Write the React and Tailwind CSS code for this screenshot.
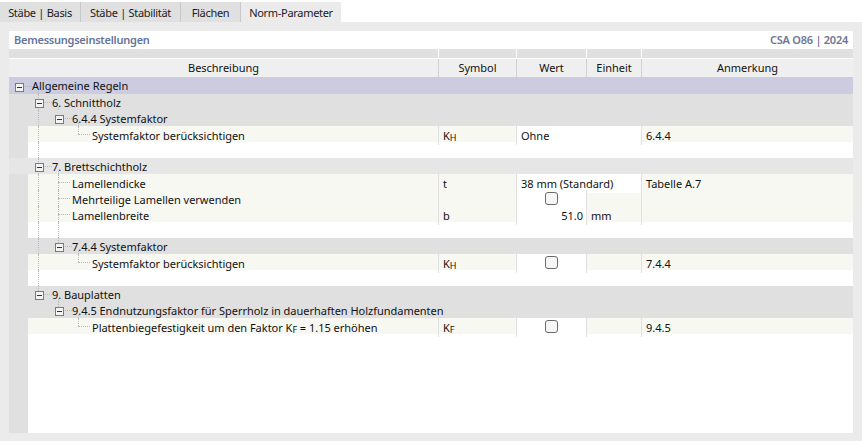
const font = { fontFamily: '"Noto Sans", sans-serif' };

const Box = ({ left, top = 5 }) => (
  <span className="absolute h-[9px] w-[9px] border border-[#7a7a7a] bg-[#f4f4f4] flex items-center justify-center" style={{ left, top }}>
    <span className="block w-[5px] h-px bg-[#333]" />
  </span>
);
const V = ({ x, top = 0, h = 16 }) => (
  <span className="absolute w-0 border-l border-dotted border-[#b8b8b8]" style={{ left: x, top, height: h }} />
);
const H = ({ x, w, top = 8 }) => (
  <span className="absolute h-0 border-t border-dotted border-[#b8b8b8]" style={{ left: x, width: w, top }} />
);

const Sep = ({ children, className = "" }) => (
  <div className={`relative z-10 flex items-center pt-[2px] border-l border-[#e0e0e0] min-w-0 whitespace-nowrap ${className}`}>{children}</div>
);

const Sym = ({ k }) => (
  <span>K<span className="text-[9px] relative top-[1px]">{k}</span></span>
);

const Check = () => (
  <span className="block w-[13px] h-[13px] -mt-[3px] rounded-[3px] border border-[#6a6a6a] bg-[#f6f6f6]" />
);

function Group({ level, label, bg = "bg-[#e0e0e0]", lines = [] }) {
  const boxX = 15 + level * 20 - 9;
  return (
    <div className={`relative h-4 pt-[2px] flex items-center ${bg} text-[#111]`}>
      {lines.map((l, i) => <V key={i} {...l} />)}
      <Box left={boxX} />
      <H x={boxX + 10} w={7} />
      <span className="relative z-10 whitespace-nowrap" style={{ paddingLeft: 23 + level * 20 }}>{label}</span>
    </div>
  );
}

function Blank({ lines = [] }) {
  return (
    <div className="relative h-4 flex">
      <div className="w-[19px] bg-[#e0e0e0]" />
      <div className="flex-1 bg-white" />
      {lines.map((l, i) => <V key={i} {...l} />)}
    </div>
  );
}

function Item({ level, label, symbol, value, check, wertOnly, right, unit, note, lines = [], hx, hw = 12 }) {
  return (
    <div className="relative h-4 flex text-[#111]">
      <div className="w-[19px] bg-[#e0e0e0]" />
      <div className="flex-1 grid grid-cols-[410px_78px_70px_55px_1fr] bg-[#f8f8f3]">
        <div className="relative z-10 flex items-center pt-[2px] whitespace-nowrap" style={{ paddingLeft: level * 20 + 4 }}>{label}</div>
        <Sep className="pl-[4px]">{symbol}</Sep>
        {wertOnly ? (
          <>
            <Sep className={`bg-white ${check ? "justify-center" : right ? "justify-end pr-[3px]" : "pl-[4px]"}`}>{check ? <Check /> : value}</Sep>
            <Sep className="pl-[4px]">{unit}</Sep>
          </>
        ) : (
          <Sep className="col-span-2 bg-white pl-[4px] overflow-hidden">{value}</Sep>
        )}
        <Sep className="pl-[4px]">{note}</Sep>
      </div>
      {lines.map((l, i) => <V key={i} {...l} />)}
      <H x={hx} w={hw} />
    </div>
  );
}

const Tab = ({ children, active, w }) => (
  <div className={`h-5 pt-[2px] flex items-center justify-center tracking-[-0.3px] ${active ? "bg-[#ebebeb]" : "bg-[#e0e0e0] border-r border-[#c8c8c8]"}`} style={{ width: w }}>
    {children}
  </div>
);

const Head = ({ children, first }) => (
  <div className="flex flex-col min-w-0">
    <div className={`h-[9px] bg-[#e0e0e0] ${first ? "" : "border-l border-white"}`} />
    <div className="h-px bg-white" />
    <div className={`h-[18px] pt-[1px] flex items-center justify-center bg-[#efefef] text-[#111] ${first ? "" : "border-l border-[#d0d0d0]"}`}>{children}</div>
  </div>
);

export default function App() {
  return (
    <div className="w-[862px] h-[441px] overflow-hidden bg-white flex flex-col text-[11px] tracking-[-0.02px]" style={font}>
      <div className="h-[22px] pt-[2px] flex text-[#1a1a1a]">
        <Tab w={81}>Stäbe | Basis</Tab>
        <Tab w={100}>Stäbe | Stabilität</Tab>
        <Tab w={60}>Flächen</Tab>
        <Tab w={100} active>Norm-Parameter</Tab>
      </div>
      <div className="flex-1 bg-[#ebebeb] pt-[9px] pl-[9px] pr-[9px] pb-[8px] flex flex-col">
        <div className="flex-1 bg-white flex flex-col min-h-0">
          <div className="h-[18px] pt-px flex items-center justify-between px-[5px] font-semibold tracking-[-0.25px] text-[#65749a]">
            <span>Bemessungseinstellungen</span>
            <span className="text-[#6f7693]">CSA O86 | 2024</span>
          </div>
          <div className="grid grid-cols-[429px_78px_70px_55px_1fr]">
            <Head first>Beschreibung</Head>
            <Head>Symbol</Head>
            <Head>Wert</Head>
            <Head>Einheit</Head>
            <Head>Anmerkung</Head>
          </div>
          <div className="relative h-[17px] pt-[2px] flex items-center bg-[#cbcce0] text-[#111]">
            <Box left={6} top={6} />
            <H x={16} w={7} top={9} />
            <span className="relative z-10 pl-[23px]">Allgemeine Regeln</span>
            <V x={29} top={14} h={3} />
          </div>
          <Group level={1} label="6. Schnittholz" lines={[{ x: 29 }, { x: 49, top: 13, h: 3 }]} />
          <Group level={2} label="6.4.4 Systemfaktor" lines={[{ x: 29 }, { x: 69, top: 13, h: 3 }]} />
          <Item level={3} label="Systemfaktor berücksichtigen" symbol={<Sym k="H" />} value="Ohne" note="6.4.4" lines={[{ x: 29 }, { x: 69, h: 8 }]} hx={69} />
          <Blank lines={[{ x: 29 }]} />
          <Group level={1} label="7. Brettschichtholz" bg="bg-[#e6e6e6]" lines={[{ x: 29 }, { x: 49, top: 13, h: 3 }]} />
          <Item level={2} label="Lamellendicke" symbol="t" value="38 mm (Standard)" note="Tabelle A.7" lines={[{ x: 29 }, { x: 49 }]} hx={49} />
          <Item level={2} label="Mehrteilige Lamellen verwenden" wertOnly check lines={[{ x: 29 }, { x: 49 }]} hx={49} />
          <Item level={2} label="Lamellenbreite" symbol="b" wertOnly right value="51.0" unit="mm" lines={[{ x: 29 }, { x: 49 }]} hx={49} />
          <Blank lines={[{ x: 29 }, { x: 49 }]} />
          <Group level={2} label="7.4.4 Systemfaktor" lines={[{ x: 29 }, { x: 49, h: 5 }, { x: 69, top: 13, h: 3 }]} />
          <Item level={3} label="Systemfaktor berücksichtigen" symbol={<Sym k="H" />} wertOnly check note="7.4.4" lines={[{ x: 29 }, { x: 69, h: 8 }]} hx={69} />
          <Blank lines={[{ x: 29 }]} />
          <Group level={1} label="9. Bauplatten" lines={[{ x: 29, h: 5 }, { x: 49, top: 13, h: 3 }]} />
          <Group level={2} label="9.4.5 Endnutzungsfaktor für Sperrholz in dauerhaften Holzfundamenten" lines={[{ x: 49, h: 5 }, { x: 69, top: 13, h: 3 }]} />
          <Item level={3} label={<span>Plattenbiegefestigkeit um den Faktor K<span className="text-[9px] relative top-[1px]">F</span> = 1.15 erhöhen</span>} symbol={<Sym k="F" />} wertOnly check note="9.4.5" lines={[{ x: 69, h: 8 }]} hx={69} />
          <div className="flex-1 flex min-h-0">
            <div className="w-[19px] bg-[#e0e0e0]" />
            <div className="flex-1 bg-white" />
          </div>
        </div>
      </div>
    </div>
  );
}
